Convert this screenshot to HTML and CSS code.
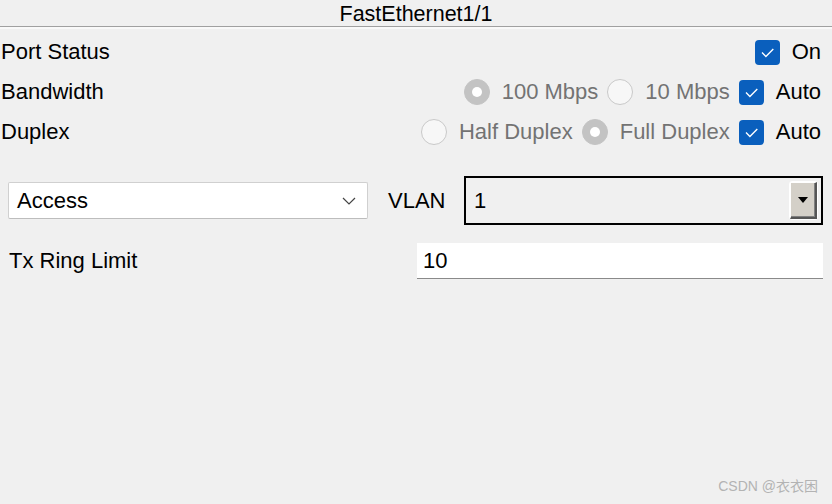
FILE: index.html
```html
<!DOCTYPE html>
<html>
<head>
<meta charset="utf-8">
<link rel="stylesheet" href="styles.css">
</head>
<body>
<div class="page">
  <div class="title">FastEthernet1/1</div>

  <div class="row">
    <div class="label">Port Status</div>
    <div class="opts">
      <div class="opt"><span class="cb"><svg viewBox="0 0 25 25" width="25" height="25"><path d="M7 12.6 L10.9 16.4 L18.3 9" fill="none" stroke="#fff" stroke-width="1.4"/></svg></span><span class="on">On</span></div>
    </div>
  </div>

  <div class="row">
    <div class="label">Bandwidth</div>
    <div class="opts">
      <div class="opt"><span class="rb checked"></span><span class="dis">100 Mbps</span></div>
      <div class="opt"><span class="rb"></span><span class="dis">10 Mbps</span></div>
      <div class="opt"><span class="cb"><svg viewBox="0 0 25 25" width="25" height="25"><path d="M7 12.6 L10.9 16.4 L18.3 9" fill="none" stroke="#fff" stroke-width="1.4"/></svg></span><span class="on">Auto</span></div>
    </div>
  </div>

  <div class="row">
    <div class="label">Duplex</div>
    <div class="opts">
      <div class="opt"><span class="rb"></span><span class="dis">Half Duplex</span></div>
      <div class="opt"><span class="rb checked"></span><span class="dis">Full Duplex</span></div>
      <div class="opt"><span class="cb"><svg viewBox="0 0 25 25" width="25" height="25"><path d="M7 12.6 L10.9 16.4 L18.3 9" fill="none" stroke="#fff" stroke-width="1.4"/></svg></span><span class="on">Auto</span></div>
    </div>
  </div>

  <div class="vrow">
    <div class="select">
      <span>Access</span>
      <svg class="chev" viewBox="0 0 14 8" width="14" height="8"><path d="M1 1 L7 7 L13 1" fill="none" stroke="#444" stroke-width="1.2"/></svg>
    </div>
    <div class="vlabel">VLAN</div>
    <div class="vbox">
      <span class="vval">1</span>
      <span class="vbtn"><span class="vface"><svg viewBox="0 0 10 6" width="10" height="6"><path d="M0 0 H10 L5 6 Z" fill="#000"/></svg></span></span>
    </div>
  </div>

  <div class="txrow">
    <div class="txlabel">Tx Ring Limit</div>
    <div class="txinput">10</div>
  </div>

  <div class="wm">CSDN @衣衣困</div>
</div>
</body>
</html>
```

FILE: styles.css
```css
html, body {
  margin: 0;
  padding: 0;
  background: #f0f0f0;
}
.page {
  width: 832px;
  height: 504px;
  position: relative;
  font-family: "Liberation Sans", Arial, "Noto Sans CJK SC", sans-serif;
  color: #000;
  overflow: hidden;
}
.title {
  height: 26px;
  line-height: 28px;
  text-align: center;
  font-size: 21.5px;
  border-bottom: 1px solid #a0a0a0;
  box-shadow: 0 2px 0 #f9f9f9;
  margin-bottom: 5px;
}
.row {
  height: 40px;
  display: flex;
  align-items: center;
  justify-content: space-between;
  padding: 0 11px 0 1px;
  font-size: 22px;
}
.opts {
  display: flex;
  align-items: center;
  gap: 9px;
}
.opt {
  display: flex;
  align-items: center;
  gap: 12px;
}
.cb {
  width: 25px;
  height: 25px;
  border-radius: 4px;
  background: #0a5fbd;
  display: block;
}
.cb svg { display: block; }
.rb {
  width: 26px;
  height: 26px;
  border-radius: 50%;
  box-sizing: border-box;
  background: #f7f7f7;
  border: 1.5px solid #c9c9c9;
  display: block;
  position: relative;
}
.rb.checked {
  background: #c3c3c3;
  border-color: #c3c3c3;
}
.rb.checked::after {
  content: "";
  position: absolute;
  left: 50%;
  top: 50%;
  width: 10px;
  height: 10px;
  margin: -5px 0 0 -5px;
  border-radius: 50%;
  background: #fff;
}
.dis { color: #737373; }
.on { color: #000; }

.vrow {
  margin-top: 24px;
  display: grid;
  grid-template-columns: 360px 1fr 359px;
  align-items: center;
  padding: 0 9px 0 8px;
  height: 49px;
  font-size: 22px;
}
.select {
  height: 37px;
  box-sizing: border-box;
  background: #fff;
  border: 1px solid #d0d0d0;
  border-bottom-color: #bdbdbd;
  border-radius: 2px;
  display: flex;
  align-items: center;
  justify-content: space-between;
  padding: 0 11px 0 8px;
}
.chev { display: block; }
.vlabel {
  padding-left: 20px;
}
.vbox {
  height: 49px;
  box-sizing: border-box;
  border: 2px solid #000;
  background: #f0f0f0;
  display: flex;
  align-items: center;
  justify-content: space-between;
  padding: 0 3px 0 8px;
}
.vbtn {
  width: 29px;
  height: 39px;
  box-sizing: border-box;
  border: 1px solid #fff;
  border-radius: 3px;
  background: #f0f0f0;
  display: block;
}
.vface {
  display: flex;
  align-items: center;
  justify-content: center;
  height: 100%;
  box-sizing: border-box;
  background: #d4d0c8;
  border-top: 1px solid #fff;
  border-left: 1px solid #fff;
  border-right: 2px solid #555;
  border-bottom: 2px solid #555;
  box-shadow: inset -1px -1px 0 #808080;
}
.vface svg { display: block; }

.txrow {
  margin-top: 18px;
  display: grid;
  grid-template-columns: 1fr 406px;
  align-items: center;
  padding: 0 9px 0 9px;
  font-size: 22px;
}
.txinput {
  height: 36px;
  box-sizing: border-box;
  background: #fff;
  border-bottom: 1px solid #8a8a8a;
  display: flex;
  align-items: center;
  padding-left: 6px;
}

.wm {
  position: absolute;
  right: 14px;
  bottom: 9px;
  font-size: 14px;
  color: #b3b3b3;
}
```
